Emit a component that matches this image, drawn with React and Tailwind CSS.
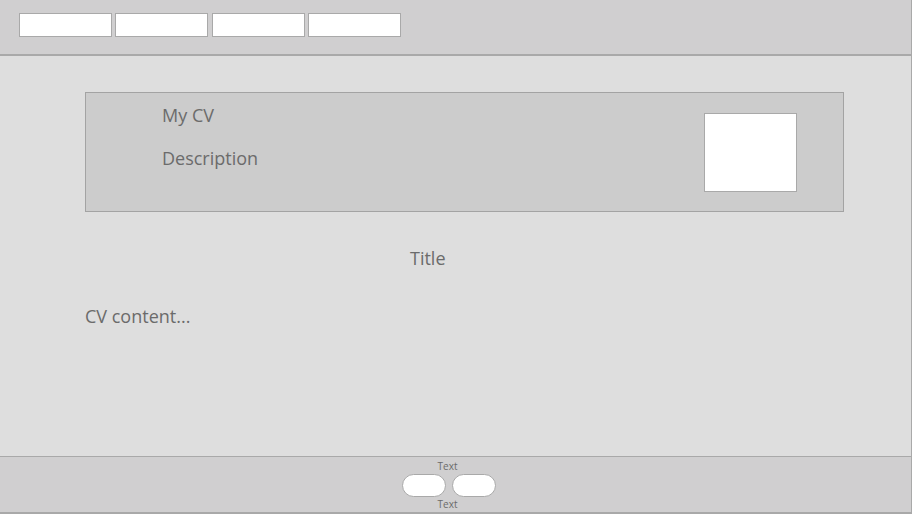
import React from 'react';

const NavBox = () => (
  <div className="w-[93px] h-[24px] bg-white border border-[#a9a9a9]" />
);

const Pill = () => (
  <div className="w-[44px] h-[23px] bg-white border border-[#a9a9a9] rounded-full" />
);

export default function App() {
  return (
    <div
      className="w-[912px] h-[514px] flex flex-col border-r border-[#a9a9a9] text-[#6b6b6b]"
      style={{ fontFamily: '"Open Sans", "Noto Sans", sans-serif' }}
    >
      {/* Top bar */}
      <div className="h-[56px] shrink-0 bg-[#d0cfd0] border-b-2 border-[#a9a9a9] flex gap-[3.4px] pl-[19px] pt-[13px]">
        <NavBox />
        <NavBox />
        <NavBox />
        <NavBox />
      </div>

      {/* Main */}
      <div className="flex-1 bg-[#dedede] pt-[36px] pl-[85px] pr-[67px]">
        <div className="h-[120px] bg-[#cccccc] border border-[#a3a3a3] flex justify-between pl-[76px] pr-[46px]">
          <div className="pt-[10px] text-[18px] leading-[24px]">
            <div>My CV</div>
            <div className="mt-[19px]">Description</div>
          </div>
          <div className="mt-[20px] w-[93px] h-[79px] bg-white border border-[#a9a9a9]" />
        </div>
        <div className="mt-[34px] pl-[325px] text-[18px] leading-[24px]">Title</div>
        <div className="mt-[34px] text-[18px] leading-[24px]">CV content...</div>
      </div>

      {/* Footer */}
      <div className="h-[58px] shrink-0 bg-[#d0cfd0] border-t border-b-2 border-[#a9a9a9] flex flex-col items-center pr-[13px] pt-[2px]">
        <div className="text-[10px] leading-[15px] -ml-[3px]">Text</div>
        <div className="flex gap-[6px]">
          <Pill />
          <Pill />
        </div>
        <div className="text-[10px] leading-[14px] -ml-[3px]">Text</div>
      </div>
    </div>
  );
}
